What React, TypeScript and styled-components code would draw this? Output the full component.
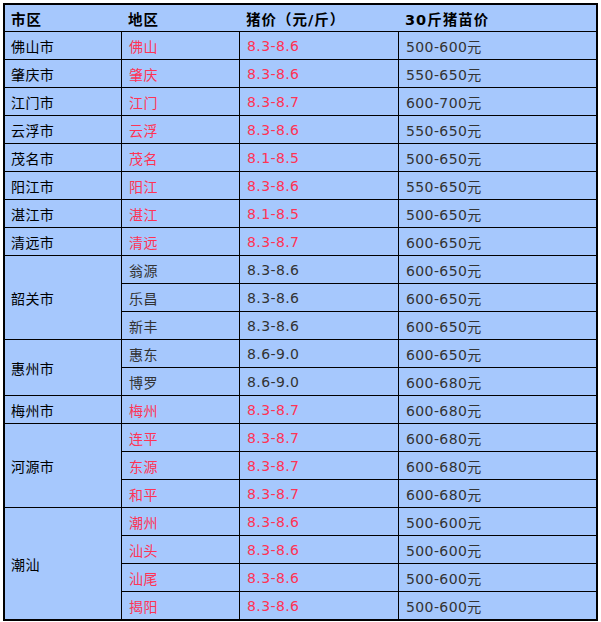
import React from "react";
import styled, { createGlobalStyle } from "styled-components";

const GlobalStyle = createGlobalStyle`
  html, body {
    margin: 0;
    padding: 0;
    background: #fff;
  }
`;

const Page = styled.div`
  padding: 3px;
`;

const Table = styled.table`
  width: 595px;
  border-collapse: separate;
  border-spacing: 0;
  border: 2px solid #000;
  background: #a6c8fd;
  font-family: "DejaVu Sans", Verdana, "Noto Sans CJK SC", sans-serif;
  font-size: 14px;
  table-layout: fixed;
`;

const HeadCell = styled.th`
  height: 26px;
  padding: 0 0 0 6px;
  text-align: left;
  font-weight: bold;
  font-size: 14.5px;
  letter-spacing: 1px;
  color: #000;
  border-bottom: 1px solid #000;
  box-sizing: content-box;
`;

type Tone = "black" | "red" | "gray";

const toneColor: Record<Tone, string> = {
  black: "#000",
  red: "#ff3355",
  gray: "#333",
};

const Row = styled.tr`
  &:last-child td {
    border-bottom: none;
  }
`;

const Cell = styled.td<{ $tone: Tone; $last?: boolean }>`
  height: 27px;
  padding: 0 0 0 7px;
  border-bottom: 1px solid #000;
  border-right: ${(p) => (p.$last ? "none" : "1px solid #000")};
  color: ${(p) => toneColor[p.$tone]};
  letter-spacing: 0.4px;
  vertical-align: middle;
  white-space: nowrap;
  box-sizing: content-box;
`;

const CityCell = styled(Cell)`
  padding-left: 6px;
`;

type Item = { district: string; price: string; piglet: string };
type Group = { city: string; hot: boolean; items: Item[] };

const groups: Group[] = [
  { city: "佛山市", hot: true, items: [{ district: "佛山", price: "8.3-8.6", piglet: "500-600元" }] },
  { city: "肇庆市", hot: true, items: [{ district: "肇庆", price: "8.3-8.6", piglet: "550-650元" }] },
  { city: "江门市", hot: true, items: [{ district: "江门", price: "8.3-8.7", piglet: "600-700元" }] },
  { city: "云浮市", hot: true, items: [{ district: "云浮", price: "8.3-8.6", piglet: "550-650元" }] },
  { city: "茂名市", hot: true, items: [{ district: "茂名", price: "8.1-8.5", piglet: "500-650元" }] },
  { city: "阳江市", hot: true, items: [{ district: "阳江", price: "8.3-8.6", piglet: "550-650元" }] },
  { city: "湛江市", hot: true, items: [{ district: "湛江", price: "8.1-8.5", piglet: "500-650元" }] },
  { city: "清远市", hot: true, items: [{ district: "清远", price: "8.3-8.7", piglet: "600-650元" }] },
  {
    city: "韶关市",
    hot: false,
    items: [
      { district: "翁源", price: "8.3-8.6", piglet: "600-650元" },
      { district: "乐昌", price: "8.3-8.6", piglet: "600-650元" },
      { district: "新丰", price: "8.3-8.6", piglet: "600-650元" },
    ],
  },
  {
    city: "惠州市",
    hot: false,
    items: [
      { district: "惠东", price: "8.6-9.0", piglet: "600-650元" },
      { district: "博罗", price: "8.6-9.0", piglet: "600-680元" },
    ],
  },
  { city: "梅州市", hot: true, items: [{ district: "梅州", price: "8.3-8.7", piglet: "600-680元" }] },
  {
    city: "河源市",
    hot: true,
    items: [
      { district: "连平", price: "8.3-8.7", piglet: "600-680元" },
      { district: "东源", price: "8.3-8.7", piglet: "600-680元" },
      { district: "和平", price: "8.3-8.7", piglet: "600-680元" },
    ],
  },
  {
    city: "潮汕",
    hot: true,
    items: [
      { district: "潮州", price: "8.3-8.6", piglet: "500-600元" },
      { district: "汕头", price: "8.3-8.6", piglet: "500-600元" },
      { district: "汕尾", price: "8.3-8.6", piglet: "500-600元" },
      { district: "揭阳", price: "8.3-8.6", piglet: "500-600元" },
    ],
  },
];

export default function App() {
  return (
    <Page>
      <GlobalStyle />
      <Table>
        <colgroup>
          <col style={{ width: 117 }} />
          <col style={{ width: 118 }} />
          <col style={{ width: 159 }} />
          <col style={{ width: 197 }} />
        </colgroup>
        <thead>
          <tr>
            <HeadCell>市区</HeadCell>
            <HeadCell>地区</HeadCell>
            <HeadCell>猪价（元/斤）</HeadCell>
            <HeadCell>30斤猪苗价</HeadCell>
          </tr>
        </thead>
        <tbody>
          {groups.map((g, gi) =>
            g.items.map((it, i) => {
              const tone: Tone = g.hot ? "red" : "gray";
              return (
                <Row key={g.city + it.district}>
                  {i === 0 && (
                    <CityCell
                      $tone="black"
                      rowSpan={g.items.length}
                      style={gi === groups.length - 1 ? { borderBottom: "none" } : undefined}
                    >
                      {g.city}
                    </CityCell>
                  )}
                  <Cell $tone={tone}>{it.district}</Cell>
                  <Cell $tone={tone}>{it.price}</Cell>
                  <Cell $tone="gray" $last>
                    {it.piglet}
                  </Cell>
                </Row>
              );
            })
          )}
        </tbody>
      </Table>
    </Page>
  );
}
